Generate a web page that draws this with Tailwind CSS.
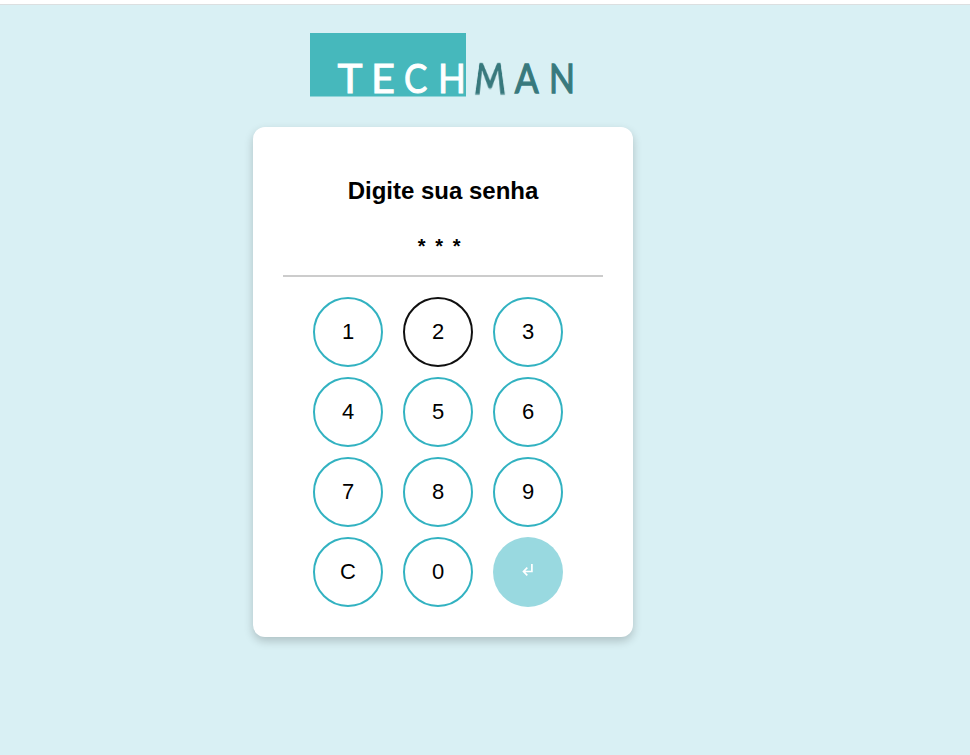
<!DOCTYPE html>
<html lang="pt-BR">
<head>
<meta charset="utf-8">
<title>Techman</title>
<script src="https://cdn.jsdelivr.net/npm/@tailwindcss/browser@4"></script>
</head>
<body class="bg-white pt-1 font-['Liberation_Sans',Arial,sans-serif] text-black">
<main class="h-[751px] overflow-hidden border-t border-[#dcdfe0] bg-[#d9f0f4] pl-[253px] pt-7">
  <div class="flex w-[380px] flex-col items-center">
    <div class="relative ml-[2px] h-16 w-[268px]">
      <svg class="block h-20 w-[280px] overflow-visible" viewBox="0 0 280 80" role="img" aria-label="TECHMAN">
        <rect width="156" height="63.5" fill="#46b8bc"/>
        <g font-family="Lato, sans-serif" font-size="41.5" text-anchor="middle" stroke-width="1">
          <g fill="#fff" stroke="#fff">
            <text transform="translate(40 60) scale(1.02 1)">T</text>
            <text x="73" y="60">E</text>
            <text transform="translate(105.7 60) scale(.84 1)">C</text>
            <text transform="translate(142 60) scale(.88 1)">H</text>
          </g>
          <g fill="#38797d" stroke="#38797d" stroke-width="1.3">
            <text transform="translate(216.7 60) scale(.85 1)">A</text>
            <text transform="translate(252 60) scale(.82 1)">N</text>
          </g>
        </g>
      </svg>
      <!-- The M's legs spread towards the baseline -->
      <span class="absolute top-[19px] left-[160px] w-10 origin-[50%_40px] text-center font-['Lato',sans-serif] text-[41.5px] leading-[50px] text-[#38797d] [-webkit-text-stroke:1.3px_#38797d] [transform:matrix3d(0.9,0,0,0,0,1.4,0,-0.0133,0,0,1,0,0,0,0,1)]">M</span>
    </div>
    <section class="mt-[30px] h-[510px] w-full rounded-xl bg-white px-[30px] pt-[50px] shadow-[0_4px_10px_rgba(0,0,0,0.2)]">
      <h1 class="text-center text-2xl leading-7 font-bold">Digite sua senha</h1>
      <div class="mt-5 h-[52px] border-b-2 border-[#ccc] pt-[6px] pl-[2px] text-center text-xl leading-[30px] font-bold tracking-[9.7px]">***</div>
      <div class="mt-5 ml-[30px] grid w-[250px] grid-cols-3 gap-x-5 gap-y-[10px] text-[22px]">
        <button class="size-[70px] rounded-full border-2 border-[#32b2c1] pb-[2px]">1</button>
        <button class="size-[70px] rounded-full border-2 border-[#101010] pb-[2px]">2</button>
        <button class="size-[70px] rounded-full border-2 border-[#32b2c1] pb-[2px]">3</button>
        <button class="size-[70px] rounded-full border-2 border-[#32b2c1] pb-[2px]">4</button>
        <button class="size-[70px] rounded-full border-2 border-[#32b2c1] pb-[2px]">5</button>
        <button class="size-[70px] rounded-full border-2 border-[#32b2c1] pb-[2px]">6</button>
        <button class="size-[70px] rounded-full border-2 border-[#32b2c1] pb-[2px]">7</button>
        <button class="size-[70px] rounded-full border-2 border-[#32b2c1] pb-[2px]">8</button>
        <button class="size-[70px] rounded-full border-2 border-[#32b2c1] pb-[2px]">9</button>
        <button class="size-[70px] rounded-full border-2 border-[#32b2c1] pb-[2px]">C</button>
        <button class="size-[70px] rounded-full border-2 border-[#32b2c1] pb-[2px]">0</button>
        <button class="flex size-[70px] items-center justify-center rounded-full bg-[#99d9e0]" aria-label="Enter">
          <svg class="mb-[4px] h-[14px] w-3" viewBox="0 0 12 14" fill="none" stroke="#fff" stroke-width="1.7"><path d="M9.9 1v7.5H1.5M5.3 4.7L1.5 8.5l3.8 3.8"/></svg>
        </button>
      </div>
    </section>
  </div>
</main>
</body>
</html>
